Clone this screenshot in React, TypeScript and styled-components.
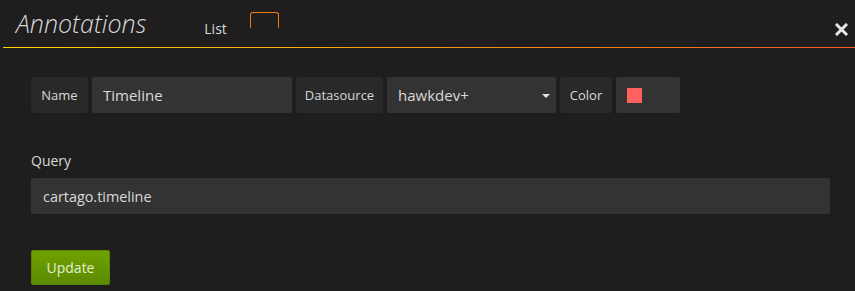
import React from "react";
import styled, { createGlobalStyle } from "styled-components";

const GlobalStyle = createGlobalStyle`
  html, body {
    margin: 0;
    padding: 0;
    background: #1f1d1d;
  }
  body {
    font-family: "Open Sans", "Liberation Sans", sans-serif;
    font-size: 14px;
    color: #d8d9da;
  }
`;

const Page = styled.div`
  width: 855px;
  height: 291px;
  background: #1f1d1d;
  overflow: hidden;
`;

const Header = styled.div`
  position: relative;
  display: flex;
  align-items: flex-end;
  height: 47px;
  margin-left: 3px;
  border-bottom: 1px solid transparent;
  border-image: linear-gradient(to right, #ffd500 0%, #f05a28 100%) 1;
`;

const Title = styled.h2`
  margin: 0 0 0 13px;
  align-self: flex-start;
  padding-top: 6px;
  font-size: 25px;
  font-weight: 300;
  font-style: italic;
  line-height: 34px;
  color: #d8d9da;
`;

const Tabs = styled.div`
  display: flex;
  align-items: flex-end;
  margin-left: 58px;
  gap: 23px;
  height: 36px;
  align-self: flex-start;
  padding-top: 12px;
  box-sizing: border-box;
`;

const Tab = styled.div<{ $active?: boolean }>`
  height: ${(p) => (p.$active ? "15px" : "auto")};
  width: ${(p) => (p.$active ? "27px" : "auto")};
  align-self: ${(p) => (p.$active ? "flex-start" : "flex-end")};
  border: ${(p) => (p.$active ? "1px solid #eb7b18" : "none")};
  border-bottom: none;
  border-radius: 3px 3px 0 0;
  font-size: 14px;
  line-height: 18px;
  color: #d8d9da;
  margin-bottom: ${(p) => (p.$active ? "0" : "-2px")};
`;

const Close = styled.div`
  position: absolute;
  right: 7px;
  top: 21px;
  width: 13px;
  height: 13px;
`;

const Body = styled.div`
  padding: 29px 25px 0 31px;
`;

const Row = styled.div`
  display: flex;
  gap: 4px;
  height: 36px;
`;

const Label = styled.div<{ $w: number }>`
  width: ${(p) => p.$w}px;
  display: flex;
  align-items: center;
  justify-content: center;
  background: #292929;
  border-radius: 2px;
  font-size: 13px;
  color: #d8d9da;
`;

const Input = styled.div<{ $w: number }>`
  position: relative;
  width: ${(p) => p.$w}px;
  display: flex;
  align-items: center;
  padding-left: 11px;
  box-sizing: border-box;
  background: #333333;
  border-radius: 2px;
  font-size: 15px;
  color: #d8d9da;
`;

const Caret = styled.div`
  position: absolute;
  right: 6px;
  top: 17px;
  width: 0;
  height: 0;
  border-left: 4px solid transparent;
  border-right: 4px solid transparent;
  border-top: 4px solid #e3e3e3;
`;

const Swatch = styled.div<{ $color: string }>`
  width: 15px;
  height: 15px;
  background: ${(p) => p.$color};
`;

const ColorBox = styled(Input)`
  padding-left: 11px;
`;

const Field = styled.div`
  margin-top: 38px;
`;

const FieldLabel = styled.div`
  font-size: 14px;
  line-height: 20px;
  color: #d8d9da;
  margin-bottom: 7px;
`;

const WideInput = styled.div`
  width: 799px;
  height: 36px;
  display: flex;
  align-items: center;
  padding-left: 12px;
  box-sizing: border-box;
  background: #333333;
  border-radius: 2px;
  font-size: 14.4px;
  color: #d8d9da;
`;

const Button = styled.button`
  margin-top: 36px;
  width: 79px;
  height: 35px;
  border: 1px solid #5a8500;
  border-radius: 2px;
  background: linear-gradient(to bottom, #6fa100, #5b8b00);
  font-family: "Open Sans", "Liberation Sans", sans-serif;
  font-size: 14px;
  color: #e6eed6;
  padding: 0;
`;

export default function App() {
  return (
    <Page>
      <GlobalStyle />
      <Header>
        <Title>Annotations</Title>
        <Tabs>
          <Tab>List</Tab>
          <Tab $active />
        </Tabs>
        <Close>
          <svg width="13" height="13" viewBox="0 0 13 13">
            <path d="M2 2 L11 11 M11 2 L2 11" stroke="#e8e8e8" strokeWidth="3" strokeLinecap="square" />
          </svg>
        </Close>
      </Header>
      <Body>
        <Row>
          <Label $w={57}>Name</Label>
          <Input $w={200}>Timeline</Input>
          <Label $w={87}>Datasource</Label>
          <Input $w={169}>
            hawkdev+
            <Caret />
          </Input>
          <Label $w={52}>Color</Label>
          <ColorBox $w={64}>
            <Swatch $color="#ff6060" />
          </ColorBox>
        </Row>
        <Field>
          <FieldLabel>Query</FieldLabel>
          <WideInput>cartago.timeline</WideInput>
        </Field>
        <Button>Update</Button>
      </Body>
    </Page>
  );
}
